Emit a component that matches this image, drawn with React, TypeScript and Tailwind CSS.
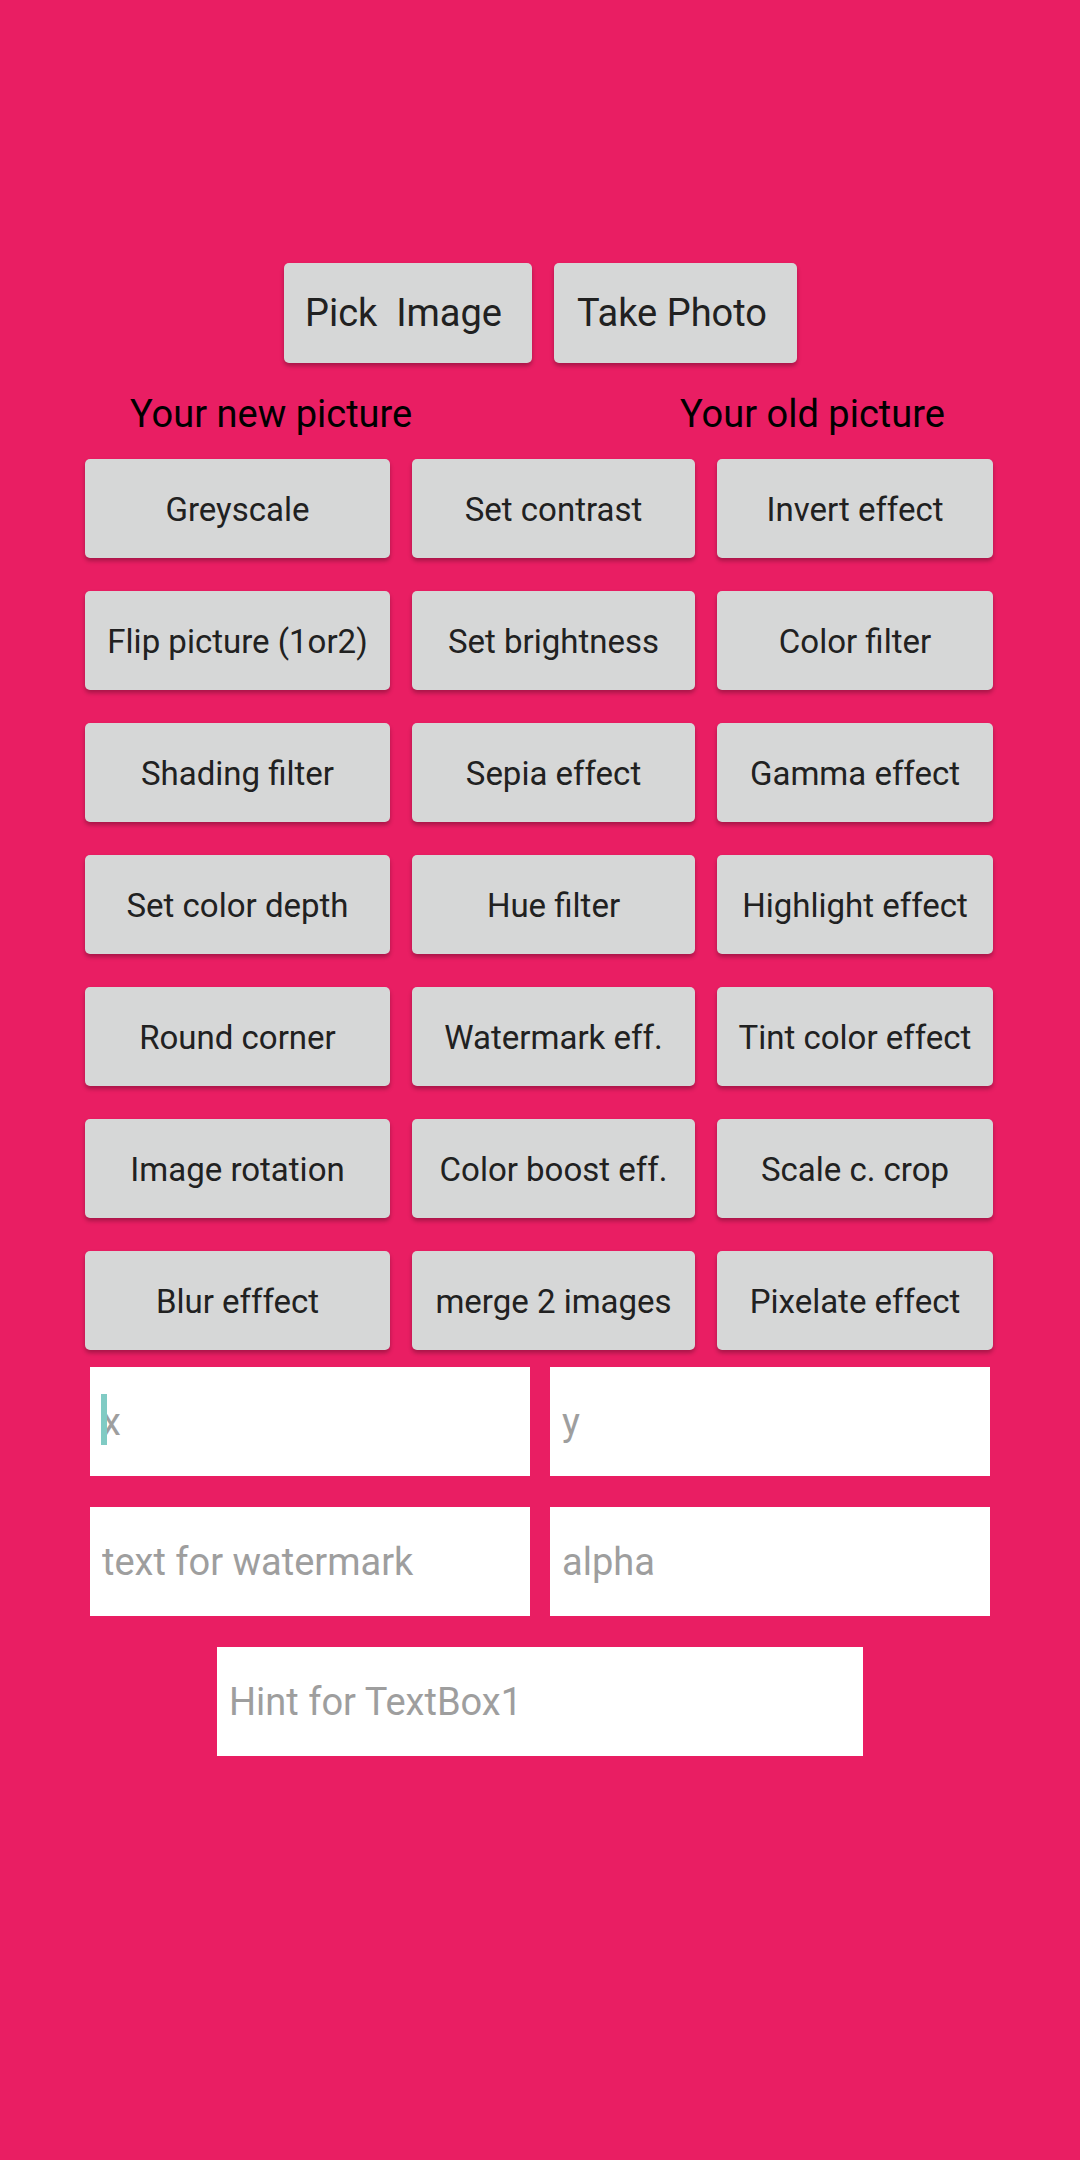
import React from "react";

const rows: string[][] = [
  ["Greyscale", "Set contrast", "Invert effect"],
  ["Flip picture (1or2)", "Set brightness", "Color filter"],
  ["Shading filter", "Sepia effect", "Gamma effect"],
  ["Set color depth", "Hue filter", "Highlight effect"],
  ["Round corner", "Watermark eff.", "Tint color effect"],
  ["Image rotation", "Color boost eff.", "Scale c. crop"],
  ["Blur efffect", "merge 2 images", "Pixelate effect"],
];

const colWidths = ["w-[305px]", "w-[283px]", "w-[276px]"];

const btn =
  "flex items-center justify-center rounded-[5px] bg-[#d6d7d7] text-[#212121] shadow-[0_3px_4px_rgba(0,0,0,0.28)]";

const Field = ({ hint, width, caret }: { hint: string; width: string; caret?: boolean }) => (
  <div className={`relative h-[109px] bg-white ${width}`}>
    <input
      readOnly
      placeholder={hint}
      className="h-full w-full bg-transparent pl-[12px] text-[38px] text-[#212121] outline-none placeholder:text-[#9e9e9e]"
    />
    {caret && <span className="absolute left-[11px] top-[27px] h-[51px] w-[6px] bg-[#80cbc4]" />}
  </div>
);

export default function App() {
  return (
    <div className="min-h-[2160px] w-[1080px] bg-[#e91e63] pt-[263px] font-['Roboto',sans-serif]">
      <div className="flex justify-center gap-[22px]">
        <button className={`${btn} h-[100px] w-[248px] whitespace-pre pr-[8px] text-[38px]`}>Pick  Image</button>
        <button className={`${btn} h-[100px] w-[243px] pr-[6px] text-[38px]`}>Take Photo</button>
      </div>

      <div className="flex h-[96px] items-center pl-[130px] pt-[6px] text-[38px] text-black">
        <span className="w-[550px]">Your new picture</span>
        <span>Your old picture</span>
      </div>

      <div className="flex flex-col gap-[33px] pl-[85px]">
        {rows.map((row, i) => (
          <div key={i} className="flex gap-[22px]">
            {row.map((label, j) => (
              <button key={label} className={`${btn} h-[99px] ${colWidths[j]} pt-[2px] text-[33px]`}>
                {label}
              </button>
            ))}
          </div>
        ))}
      </div>

      <div className="mt-[17px] flex flex-col gap-[31px]">
        <div className="flex gap-[20px] pl-[90px]">
          <Field hint="x" width="w-[440px]" caret />
          <Field hint="y" width="w-[440px]" />
        </div>
        <div className="flex gap-[20px] pl-[90px]">
          <Field hint="text for watermark" width="w-[440px]" />
          <Field hint="alpha" width="w-[440px]" />
        </div>
        <div className="flex pl-[217px]">
          <Field hint="Hint for TextBox1" width="w-[646px]" />
        </div>
      </div>
    </div>
  );
}
